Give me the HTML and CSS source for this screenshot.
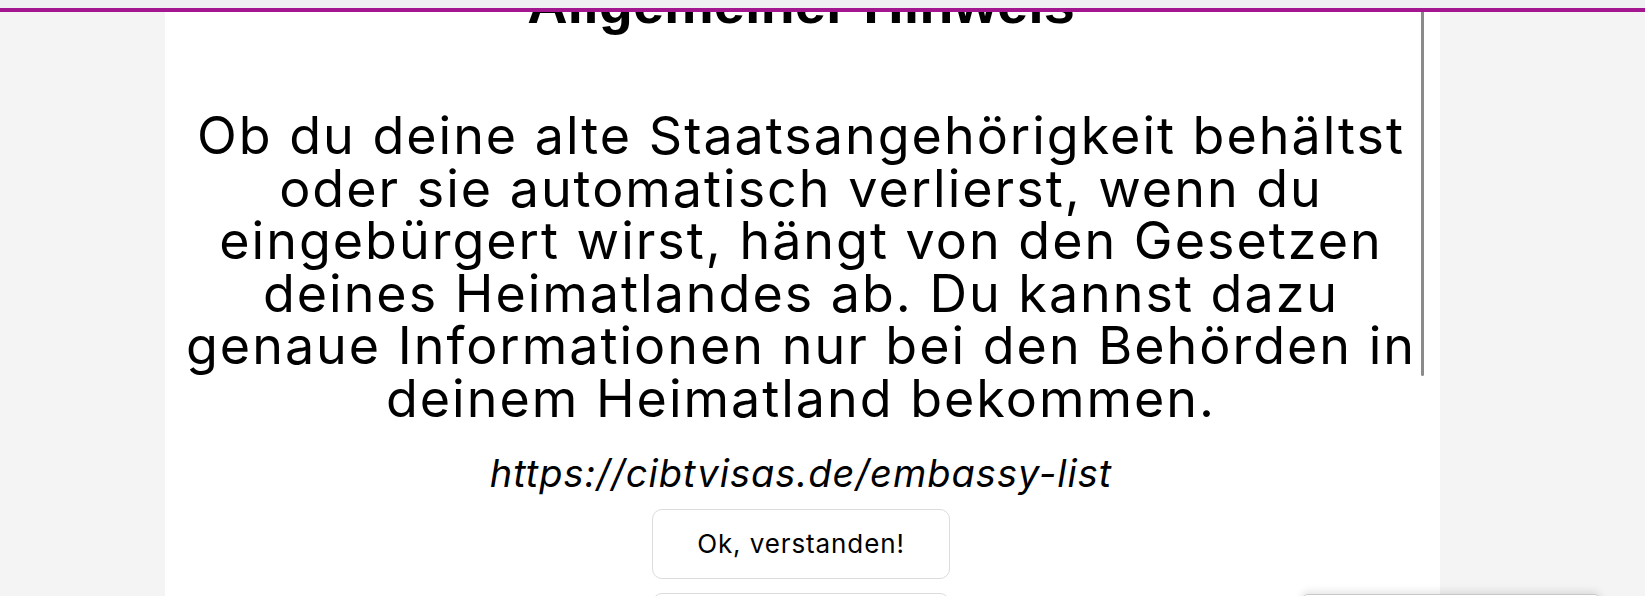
FILE: index.html
```html
<!DOCTYPE html>
<html lang="de">
<head>
<meta charset="utf-8">
<title>Allgemeiner Hinweis</title>
<link rel="stylesheet" href="styles.css">
</head>
<body>
  <div class="topbar"></div>
  <div class="accent"></div>
  <div class="page">
    <div class="side"></div>
    <main class="panel">
      <div class="dialog">
        <h1 class="title">Allgemeiner Hinweis</h1>
        <p class="message">Ob du deine alte Staatsangehörigkeit behältst oder sie automatisch verlierst, wenn du eingebürgert wirst, hängt von den Gesetzen deines Heimatlandes ab. Du kannst dazu genaue Informationen nur bei den Behörden in deinem Heimatland bekommen.</p>
        <p class="link">https://cibtvisas.de/embassy-list</p>
        <button class="btn">Ok, verstanden!</button>
        <button class="btn">Mehr erfahren</button>
      </div>
      <div class="scroll-thumb"></div>
    </main>
    <div class="side"></div>
  </div>
  <div class="widget"></div>
</body>
</html>
```
FILE: styles.css
```css
html, body {
  margin: 0;
  padding: 0;
  height: 100%;
  overflow: hidden;
}
body {
  background: #f4f4f4;
  font-family: Inter, "Noto Sans", sans-serif;
  color: #000;
}
.topbar {
  height: 8px;
  background: #eff0f2;
}
.accent {
  height: 4px;
  background: #a3168f;
  position: relative;
  z-index: 2;
}
.page {
  display: grid;
  grid-template-columns: 165px 1275px 1fr;
  height: 584px;
}
.side {
  background: #f4f4f4;
}
.panel {
  background: #fff;
  position: relative;
  overflow: hidden;
}
.dialog {
  display: flex;
  flex-direction: column;
  align-items: center;
  text-align: center;
  padding-right: 3px;
}
.title {
  margin: -36px 0 0;
  font-family: "Liberation Sans", Arial, sans-serif;
  font-weight: 700;
  font-size: 56px;
  line-height: 56px;
}
.message {
  margin: 78px 0 0;
  width: 1240px;
  font-size: 52px;
  line-height: 52.6px;
  font-weight: 400;
  letter-spacing: 2px;
}
.link {
  margin: 26px 0 0;
  font-style: italic;
  font-size: 38px;
  line-height: 42px;
  letter-spacing: 1px;
}
.btn {
  margin: 15px 0 0;
  width: 298px;
  height: 70px;
  background: #fff;
  border: 1px solid #dcdcdc;
  border-radius: 10px;
  font-family: Inter, "Noto Sans", sans-serif;
  font-size: 26px;
  letter-spacing: 0.9px;
  color: #000;
  flex: none;
}
.btn + .btn {
  margin-top: 14px;
}
.scroll-thumb {
  position: absolute;
  left: 1256px;
  top: 0;
  width: 3px;
  height: 364px;
  background: #8a8a8a;
  border-radius: 0 0 2px 2px;
}
.widget {
  position: absolute;
  left: 1302px;
  top: 594px;
  width: 298px;
  height: 40px;
  background: #fff;
  border-top: 1px solid #c8c8c8;
  border-radius: 6px 6px 0 0;
  box-shadow: 0 -2px 8px rgba(0, 0, 0, 0.12);
}
```
